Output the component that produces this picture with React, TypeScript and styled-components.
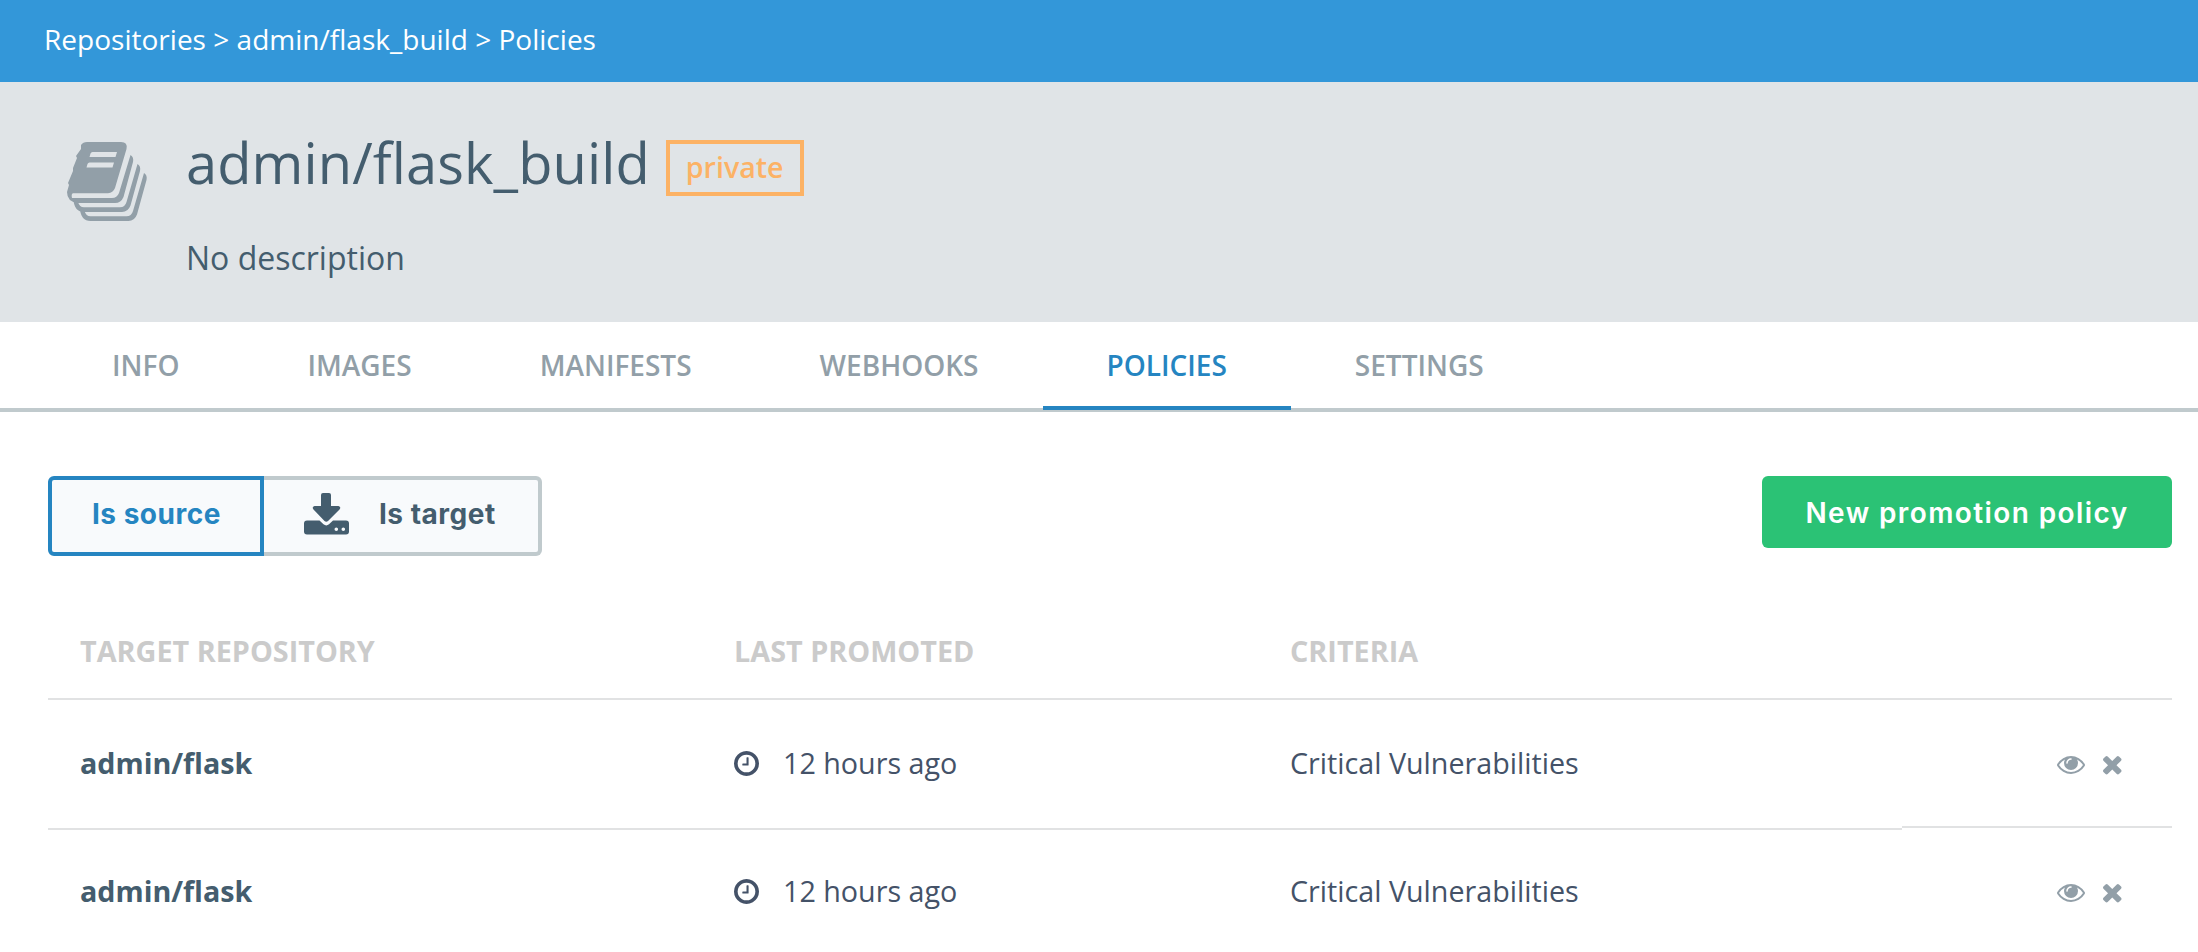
import React from 'react';
import styled, { createGlobalStyle, css } from 'styled-components';

const GlobalStyle = createGlobalStyle`
  *, *::before, *::after { box-sizing: border-box; }
  body { margin: 0; background: #fff; font-family: 'Open Sans', sans-serif; color: #445d6e; }
  button { font: inherit; cursor: pointer; }
`;

const Page = styled.div`
  width: 100%;
  min-height: 952px;
  overflow: hidden;
`;

const Breadcrumb = styled.nav`
  height: 82px;
  padding: 0 44px;
  background: #3397d9;
  color: #fff;
  font-size: 28px;
  line-height: 78px;
  letter-spacing: 0.015px;
`;

const RepoHeader = styled.header`
  display: flex;
  height: 240px;
  padding: 58px 66px 0;
  background: #e0e4e7;
`;

const BooksIcon = styled.svg`
  width: 82px;
  height: 82px;
  flex: none;
  margin-right: 38px;
  color: #929fa8;
`;

const TitleRow = styled.div`
  display: flex;
  align-items: flex-start;
  gap: 16px;
`;

const Title = styled.h1`
  margin: -14px 0 0;
  font-size: 56px;
  line-height: 72px;
  font-weight: 400;
  letter-spacing: 0.1px;
`;

const Badge = styled.span`
  height: 56px;
  padding: 0 16px;
  border: 4px solid #fcb265;
  color: #fcb265;
  font-size: 28.600px;
  line-height: 46px;
  font-weight: 600;
`;

const Description = styled.p`
  margin: 38px 0 0;
  font-size: 32px;
  line-height: 44px;
`;

const TabBar = styled.nav`
  display: flex;
  height: 90px;
  padding-left: 48px;
  border-bottom: 4px solid #c0cacd;
`;

const Tab = styled.a<{ $active?: boolean }>`
  height: 88px;
  padding: 0 64px;
  border-bottom: 4px solid ${p => (p.$active ? '#2585c1' : 'transparent')};
  color: ${p => (p.$active ? '#2585c1' : '#929fa8')};
  font-size: 28px;
  line-height: 86px;
  font-weight: 600;
`;

const Content = styled.main`
  padding: 64px 26px 0 48px;
`;

const Toolbar = styled.div`
  display: flex;
  justify-content: space-between;
  align-items: flex-start;
`;

const Segments = styled.div`
  display: flex;
`;

const Segment = styled.button<{ $active?: boolean }>`
  display: flex;
  align-items: center;
  height: 80px;
  background: #f8fafc;
  font-family: Inter, sans-serif;
  font-size: 28px;
  font-weight: 700;
  letter-spacing: 0.5px;
  white-space: nowrap;
  ${p => p.$active
    ? css`
        width: 216px;
        padding: 0 0 4px 40px;
        border: 4px solid #2585c1;
        border-radius: 6px 0 0 6px;
        color: #2585c1;
      `
    : css`
        width: 278px;
        padding: 0 0 4px 40px;
        border: 4px solid #c0cacd;
        border-left: 0;
        border-radius: 0 6px 6px 0;
        color: #445d6e;
      `}
`;

const DownloadIcon = styled.svg`
  width: 45px;
  height: 42px;
  margin-right: 30px;
`;

const PrimaryButton = styled.button`
  width: 410px;
  height: 72px;
  padding: 2px 0 0;
  border: 0;
  border-radius: 6px;
  background: #2bc275;
  color: #fff;
  font-family: Inter, sans-serif;
  font-size: 28px;
  font-weight: 600;
  letter-spacing: 1.4px;
`;

const Table = styled.div`
  margin-top: 44px;
`;

const HeadRow = styled.div`
  display: grid;
  grid-template-columns: 654px 556px 1fr;
  height: 100px;
  padding-left: 32px;
  border-bottom: 2px solid #e1e2e3;
  color: #cbcbcb;
  font-size: 28.800px;
  line-height: 102px;
  font-weight: 700;
`;

const Row = styled.div`
  display: grid;
  grid-template-columns: 686px 556px 612px 1fr;
  height: 128px;
  font-size: 28.700px;
  line-height: 126px;
  color: #445268;

  & + & > :not(:last-child) {
    padding-bottom: 4px;
    border-top: 2px solid #e1e2e3;
    line-height: 122px;
  }
  &:not(:last-child) > :last-child {
    border-bottom: 2px solid #e1e2e3;
  }
`;

const Repository = styled.div`
  padding-left: 32px;
  color: #445d6e;
  font-weight: 700;
`;

const Cell = styled.div`
  display: flex;
  align-items: center;
  padding-bottom: 2px;
`;

const ClockIcon = styled.svg`
  width: 25px;
  height: 25px;
  margin: 1px 24px 0 0;
`;

const Actions = styled.div`
  display: flex;
  align-items: flex-start;
  gap: 18px;
  padding: 56px 0 0 155px;
  color: #929fa8;
`;

const EyeIcon = styled.svg`
  width: 28px;
  height: 18px;
`;

const RemoveIcon = styled.svg`
  width: 18.500px;
  height: 18.500px;
`;

const tabs = ['INFO', 'IMAGES', 'MANIFESTS', 'WEBHOOKS', 'POLICIES', 'SETTINGS'];

const policies = [
  { id: 1, target: 'admin/flask', promoted: '12 hours ago', criteria: 'Critical Vulnerabilities' },
  { id: 2, target: 'admin/flask', promoted: '12 hours ago', criteria: 'Critical Vulnerabilities' },
];

const LOWER_BOOK =
  'M71.500 24Q75 26 74 31L64.500 65.500Q62 72 56 72H18Q8.500 72 7.500 60L12 62Q13.500 67.300 18 67.300H54Q59 67.300 60.500 62Z';

export default function App() {
  return (
    <Page>
      <GlobalStyle />
      <Breadcrumb>Repositories &gt; admin/flask_build &gt; Policies</Breadcrumb>
      <RepoHeader>
        <BooksIcon viewBox="0 0 82 82" fill="currentColor">
          <path
            fillRule="evenodd"
            d="M21 2H55Q62 2 60.500 9L49 48Q47 53 42 53.300H7Q5 54 6 58H46Q51 58 53 53L64.500 15Q68 17 67 22L57.500 57Q55 63 49 63H12Q1 62 1 52L3 45L2 43L7 31V28L11 18L10 16L15 9V5Q17 2 21 2ZM26.500 12Q25 12 24.500 13.500L23.500 17H49.500L51 12ZM23.500 22.500Q22 22.500 21.500 24L20.500 27.500H46.500L48 22.500Z"
          />
          <path d={LOWER_BOOK} />
          <path d={LOWER_BOOK} transform="translate(6.500 9)" />
        </BooksIcon>
        <div>
          <TitleRow>
            <Title>admin/flask_build</Title>
            <Badge>private</Badge>
          </TitleRow>
          <Description>No description</Description>
        </div>
      </RepoHeader>
      <TabBar>
        {tabs.map(tab => (
          <Tab key={tab} $active={tab === 'POLICIES'}>{tab}</Tab>
        ))}
      </TabBar>
      <Content>
        <Toolbar>
          <Segments>
            <Segment $active>Is source</Segment>
            <Segment>
              <DownloadIcon viewBox="0 0 45 42" fill="currentColor">
                <path d="M19 0H25Q27 0 27 2V13H34.500Q37.500 14 35.500 16.500L24 28Q22.300 29.500 20.500 28L9.500 16.500Q7.500 14 10.500 13H17V2Q17 0 19 0Z" />
                <path fillRule="evenodd" d="M3 27.500H15.500L19.500 31.300Q22.300 33.500 25 31.300L29 27.500H42Q45 27.500 45 30.500V38.500Q45 41.500 42 41.500H3Q0 41.500 0 38.500V30.500Q0 27.500 3 27.500ZM32.300 34.400A1.800 1.800 0 1 0 32.300 38A1.800 1.800 0 1 0 32.300 34.400ZM39.300 34.400A1.800 1.800 0 1 0 39.300 38A1.800 1.800 0 1 0 39.300 34.400Z" />
              </DownloadIcon>
              Is target
            </Segment>
          </Segments>
          <PrimaryButton>New promotion policy</PrimaryButton>
        </Toolbar>
        <Table>
          <HeadRow>
            <span>TARGET REPOSITORY</span>
            <span>LAST PROMOTED</span>
            <span>CRITERIA</span>
          </HeadRow>
          {policies.map(policy => (
            <Row key={policy.id}>
              <Repository>{policy.target}</Repository>
              <Cell>
                <ClockIcon viewBox="128 128 1536 1536" fill="currentColor">
                  <path d="M1024 544v448q0 14-9 23t-23 9h-320q-14 0-23-9t-9-23v-64q0-14 9-23t23-9h224v-352q0-14 9-23t23-9h64q14 0 23 9t9 23zm416 352q0-148-73-273t-198-198-273-73-273 73-198 198-73 273 73 273 198 198 273 73 273-73 198-198 73-273zm224 0q0 209-103 385.500t-279.500 279.500-385.500 103-385.500-103-279.500-279.500-103-385.500 103-385.500 279.500-279.500 385.500-103 385.500 103 279.500 279.500 103 385.500z" />
                </ClockIcon>
                {policy.promoted}
              </Cell>
              <Cell>{policy.criteria}</Cell>
              <Actions>
                <EyeIcon viewBox="0 384 1792 1152" fill="currentColor">
                  <path d="M1664 960q-152-236-381-353 61 104 61 225 0 185-131.500 316.500t-316.500 131.500-316.500-131.500-131.500-316.500q0-121 61-225-229 117-381 353 133 205 333.500 326.500t434.500 121.500 434.500-121.500 333.500-326.500zm-720-384q0-20-14-34t-34-14q-125 0-214.500 89.500t-89.500 214.500q0 20 14 34t34 14 34-14 14-34q0-86 61-147t147-61q20 0 34-14t14-34zm848 384q0 34-20 69-140 230-376.500 368.500t-499.500 138.500-499.500-139-376.500-368q-20-35-20-69t20-69q140-229 376.500-368t499.500-139 499.500 139 376.500 368q20 35 20 69z" />
                </EyeIcon>
                <RemoveIcon viewBox="302 366 1188 1188" fill="currentColor">
                  <path d="M1490 1322q0 40-28 68l-136 136q-28 28-68 28t-68-28l-294-294-294 294q-28 28-68 28t-68-28l-136-136q-28-28-28-68t28-68l294-294-294-294q-28-28-28-68t28-68l136-136q28-28 68-28t68 28l294 294 294-294q28-28 68-28t68 28l136 136q28 28 28 68t-28 68l-294 294 294 294q28 28 28 68z" />
                </RemoveIcon>
              </Actions>
            </Row>
          ))}
        </Table>
      </Content>
    </Page>
  );
}
